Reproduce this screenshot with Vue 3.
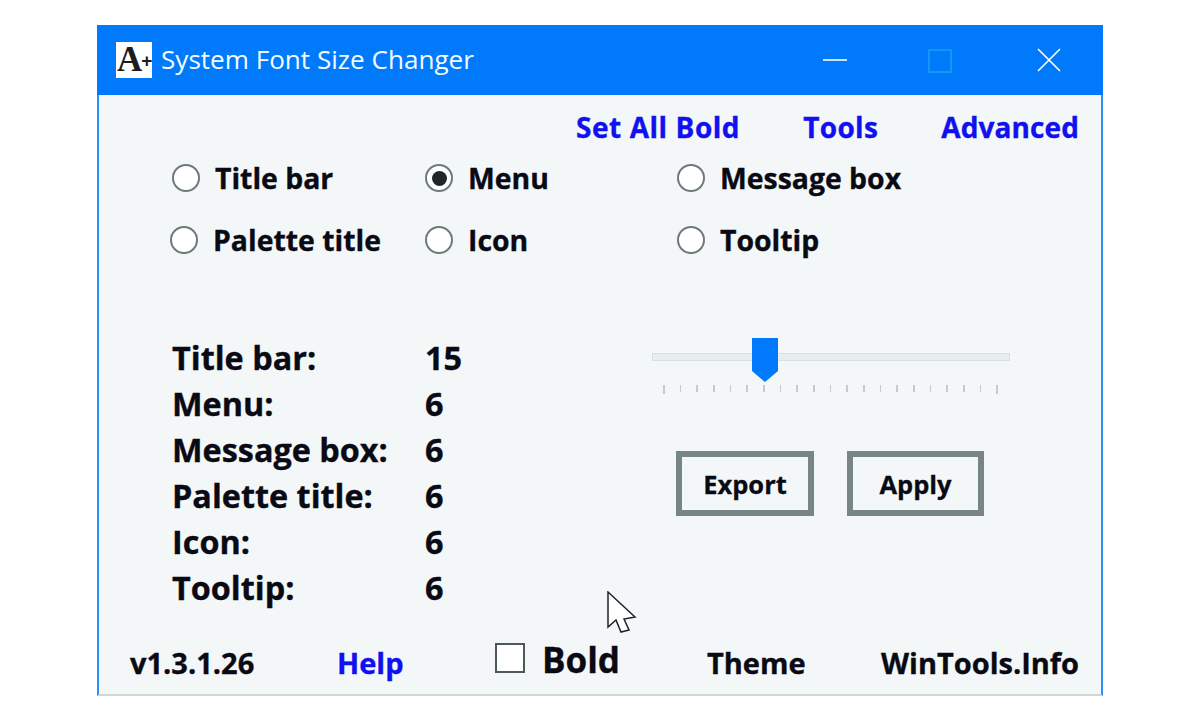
<script setup>
const radios = [
  { label: 'Title bar', checked: false },
  { label: 'Menu', checked: true },
  { label: 'Message box', checked: false },
  { label: 'Palette title', checked: false, shift: true },
  { label: 'Icon', checked: false },
  { label: 'Tooltip', checked: false }
]
const stats = [
  ['Title bar:', '15'],
  ['Menu:', '6'],
  ['Message box:', '6'],
  ['Palette title:', '6'],
  ['Icon:', '6'],
  ['Tooltip:', '6']
]
const ticks = Array.from({ length: 21 }, (_, i) => i)
</script>

<template>
  <div class="window">
    <header class="titlebar">
      <div class="logo">A<span class="plus">+</span></div>
      <div class="title">System Font Size Changer</div>
      <svg class="ctl min" width="26" height="26" viewBox="0 0 26 26"><path d="M1 13H25" stroke="#fff" stroke-width="1.6" /></svg>
      <svg class="ctl max" width="24" height="24" viewBox="0 0 24 24"><rect x="1" y="1" width="22" height="22" fill="none" stroke="#12a4f2" stroke-width="1.5" /></svg>
      <svg class="ctl close" width="24" height="24" viewBox="0 0 24 24"><path d="M1 1L23 23M23 1L1 23" stroke="#fff" stroke-width="1.7" /></svg>
    </header>

    <main class="content">
      <nav class="links">
        <span>Set All Bold</span>
        <span>Tools</span>
        <span>Advanced</span>
      </nav>

      <section class="radios">
        <label v-for="r in radios" :key="r.label" class="radio" :class="{ shift: r.shift }">
          <span class="dot" :class="{ on: r.checked }"></span>
          <span>{{ r.label }}</span>
        </label>
      </section>

      <section class="middle">
        <div class="stats">
          <template v-for="s in stats" :key="s[0]">
            <span>{{ s[0] }}</span>
            <span>{{ s[1] }}</span>
          </template>
        </div>
        <div class="controls">
          <div class="slider">
            <div class="track"></div>
            <svg class="thumb" width="26" height="44" viewBox="0 0 26 44"><path d="M0 0H26V33L13 44L0 33Z" fill="#0079fb" /></svg>
            <div class="ticks">
              <i v-for="t in ticks" :key="t" :class="{ end: t === 0 || t === 20 }"></i>
            </div>
          </div>
          <div class="buttons">
            <button class="btn export">Export</button>
            <button class="btn apply">Apply</button>
          </div>
        </div>
      </section>

      <footer class="footer">
        <span class="ver">v1.3.1.26</span>
        <span class="help">Help</span>
        <span class="check"><i class="box"></i><span class="bold-label">Bold</span></span>
        <span class="theme">Theme</span>
        <span class="site">WinTools.Info</span>
      </footer>

      <svg class="cursor" width="32" height="42" viewBox="0 0 32 42">
        <path d="M1 1L28 26L17 28L22 39L14 41L9 29L1 36Z" fill="#fff" stroke="#1c2428" stroke-width="1.500" stroke-linejoin="miter" />
      </svg>
    </main>
  </div>
</template>

<style>
html, body { margin: 0; background: #fff; }
</style>

<style scoped>
.window {
  box-sizing: border-box;
  width: 1006px;
  height: 671px;
  margin: 25px 0 0 97px;
  display: flex;
  flex-direction: column;
  border-left: 2px solid #2a90f5;
  border-right: 2px solid #2a90f5;
  border-bottom: 2px solid #cfd6d6;
  background: #f4f7f7;
  font-family: "Open Sans", "Noto Sans", sans-serif;
  color: #0a0a14;
}
.titlebar {
  flex: 0 0 70px;
  display: flex;
  align-items: center;
  background: #0079fb;
  padding-left: 19px;
  margin: 0 -2px;
}
.logo {
  width: 36px;
  height: 36px;
  margin-top: -1px;
  background: #fff;
  color: #1c1c1c;
  font: 700 35px/35px "Liberation Serif", serif;
  white-space: nowrap;
  padding-left: 1px;
  box-sizing: border-box;
  letter-spacing: -2px;
}
.plus { font: 700 19px/17px "Liberation Sans", sans-serif; vertical-align: 4px; letter-spacing: 0; margin-left: 1px; }
.title {
  margin-left: 9px;
  margin-top: -2px;
  color: #f2fbff;
  font-size: 26.100px;
  font-weight: 400;
  line-height: 34px;
  width: 640px;
  white-space: nowrap;
}
.ctl { display: block; flex: none; }
.min { margin-left: 21px; }
.max { margin-left: 80px; margin-top: 1px; }
.close { margin-left: 85px; margin-top: -1px; }

.content {
  position: relative;
  flex: 1;
  display: flex;
  flex-direction: column;
  font-weight: 700;
  font-size: 28px;
  line-height: 46px;
  -webkit-text-stroke: 0.35px currentColor;
}
.links {
  display: flex;
  justify-content: flex-end;
  gap: 63px;
  height: 46px;
  margin-top: 9px;
  padding-right: 22px;
  color: #1010f0;
  white-space: nowrap;
}
.links span:nth-child(1) { letter-spacing: 0.550px; }
.links span:nth-child(2) { letter-spacing: 0.350px; }
.links span:nth-child(3) { letter-spacing: 0.100px; }
.radios {
  display: grid;
  grid-template-columns: 253px 252px 1fr;
  grid-auto-rows: 62px;
  margin: -3px 0 0 73px;
  font-size: 28.400px;
}
.radio { display: flex; align-items: center; gap: 15px; white-space: nowrap; }
.radio.shift { margin-left: -2px; }
.dot {
  box-sizing: border-box;
  width: 28px;
  height: 28px;
  flex: none;
  border: 2.500px solid #6d7a7c;
  border-radius: 50%;
  background: #fff;
  position: relative;
}
.dot.on::after {
  content: "";
  position: absolute;
  inset: 4.500px;
  border-radius: 50%;
  background: #20272b;
}
.middle {
  display: flex;
  margin: 63px 0 0 73px;
}
.stats {
  display: grid;
  grid-template-columns: 253px auto;
  grid-auto-rows: 46px;
  width: 480px;
  white-space: nowrap;
  font-size: 32.400px;
}
.controls { display: flex; flex-direction: column; padding-top: 4px; }
.slider { position: relative; width: 358px; height: 55px; }
.track {
  position: absolute;
  left: 0;
  right: 0;
  top: 15px;
  height: 8px;
  box-sizing: border-box;
  background: #e7eeee;
  border: 1px solid #d5e0e0;
}
.thumb { position: absolute; left: 100px; top: 0; }
.ticks {
  position: absolute;
  left: 11px;
  right: 12px;
  top: 47px;
  display: flex;
  justify-content: space-between;
  align-items: flex-start;
}
.ticks i { width: 1.500px; height: 7px; background: #c3cccc; }
.ticks i.end { height: 9px; }
.buttons {
  display: flex;
  gap: 33px;
  margin: 58px 0 0 24px;
}
.btn {
  box-sizing: border-box;
  height: 65px;
  padding: 2px 0 0;
  border: 6px solid #778585;
  background: #f4f7f7;
  font: 700 25.500px/1 "Open Sans", "Noto Sans", sans-serif;
  color: #0a0a14;
  -webkit-text-stroke: 0.3px currentColor;
}
.export { width: 138px; }
.apply { width: 137px; }
.footer {
  position: relative;
  margin-top: auto;
  height: 32px;
  margin-bottom: 15px;
  display: flex;
  align-items: center;
  padding-left: 31px;
  line-height: 32px;
  white-space: nowrap;
  font-size: 29px;
}
.ver { width: 207px; }
.help { width: 158px; color: #1010f0; }
.check { display: flex; align-items: center; width: 212px; }
.box {
  box-sizing: border-box;
  width: 30px;
  height: 30px;
  border: 2.500px solid #4c585a;
  background: #fff;
  margin: 0 17px 10px 0;
}
.bold-label { font-size: 35px; margin-bottom: 6px; }
.theme { width: 174px; }
.cursor { position: absolute; left: 508px; top: 496px; }
</style>
